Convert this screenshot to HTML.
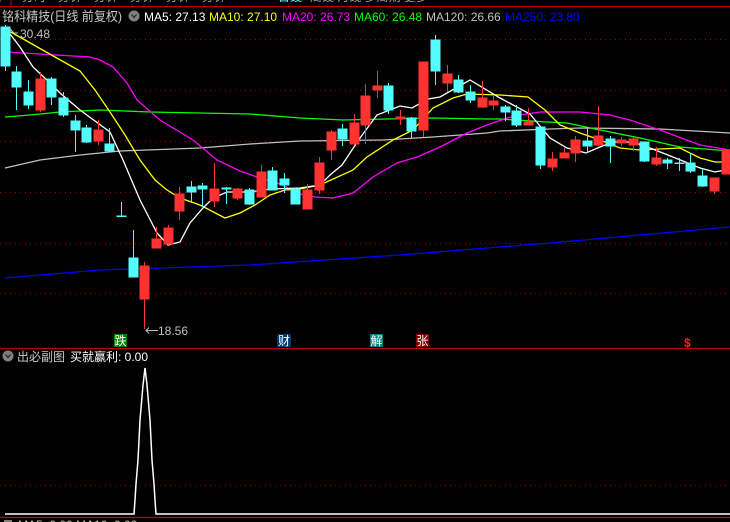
<!DOCTYPE html>
<html><head><meta charset="utf-8"><style>
html,body{margin:0;padding:0;background:#000;width:730px;height:522px;overflow:hidden}
svg{display:block}
text{font-family:"Liberation Sans","Noto Sans CJK SC",sans-serif}
</style></head><body>
<svg width="730" height="522" viewBox="0 0 730 522" xmlns="http://www.w3.org/2000/svg">
<rect width="730" height="522" fill="#000"/>
<rect x="0" y="-4" width="11" height="9" fill="none" stroke="#888" stroke-width="1"/>
<text x="22" y="1" font-size="12" fill="#a0a0a0">分时　分钟　分钟　分钟　分钟　分钟　</text>
<text x="278" y="1" font-size="12" fill="#54fcfc">日线</text>
<text x="310" y="1" font-size="12" fill="#a0a0a0">周线 月线 多周期 更多</text>
<rect x="0" y="2" width="730" height="4" fill="#000"/>
<line x1="0" y1="6.5" x2="730" y2="6.5" stroke="#c00000" stroke-width="1"/>
<line x1="11" y1="0" x2="11" y2="6" stroke="#c00000"/>
<text x="2" y="21" font-size="13" fill="#c8c8c8" textLength="120" lengthAdjust="spacingAndGlyphs">铭科精技(日线 前复权)</text>
<circle cx="134" cy="16" r="5.5" fill="#808080"/>
<path d="M131.5 14.5 L134 17.5 L136.5 14.5" stroke="#222" stroke-width="1.2" fill="none"/>
<text x="144" y="21" font-size="12" fill="#ffffff">MA5: 27.13</text>
<text x="209" y="21" font-size="12" fill="#ffff00">MA10: 27.10</text>
<text x="282" y="21" font-size="12" fill="#ff00ff">MA20: 26.73</text>
<text x="354" y="21" font-size="12" fill="#00ff00">MA60: 26.48</text>
<text x="426" y="21" font-size="12" fill="#c0c0c0">MA120: 26.66</text>
<text x="505" y="21" font-size="12" fill="#0000ff">MA250: 23.80</text>
<g stroke="#a00000" stroke-width="1" stroke-dasharray="1,4">
<line x1="0" y1="39.5" x2="730" y2="39.5"/>
<line x1="0" y1="90.5" x2="730" y2="90.5"/>
<line x1="0" y1="141.5" x2="730" y2="141.5"/>
<line x1="0" y1="192.5" x2="730" y2="192.5"/>
<line x1="0" y1="243.5" x2="730" y2="243.5"/>
<line x1="0" y1="293.5" x2="730" y2="293.5"/>
<line x1="0" y1="485.5" x2="730" y2="485.5"/>
</g>
<g fill="none" stroke-width="1.3">
<polyline stroke="#0000ff" points="5,278 100,270 250,265 400,255 550,243 730,227"/>
<polyline stroke="#c0c0c0" points="5,168 40,160 80,155 120,151 200,148 250,144 300,141 383,140 433,137 487,133 500,131 550,129 580,128 660,129 730,133"/>
<polyline stroke="#00ff00" points="5,117 30,115 60,112 100,110 150,112 200,113 250,114 300,118 343,120 433,118 487,119 500,119 547,122 567,123 600,130 640,138 680,147 730,151"/>
<polyline stroke="#ff00ff" points="5,52 40,54 90,57 100,60 113,67 127,83 137,100 160,120 193,140 217,160 240,171 260,178 280,184 300,194 315,197 333,198 353,193 373,177 397,163 417,157 440,147 467,133 487,125 507,118 520,115 540,112 580,112 610,115 630,120 660,130 700,145 730,150"/>
<polyline stroke="#ffff00" points="7,30 25,40 55,57 80,71 95,90 110,112 125,135 140,160 155,180 167,190 180,198 200,205 225,218 240,213 255,205 270,195 285,190 300,189 320,185 353,170 367,157 393,140 413,130 433,108 453,98 467,94 500,95 528,97 545,110 560,125 580,133 600,140 620,148 640,150 680,148 700,158 715,162 730,162"/>
<polyline stroke="#ffffff" points="7,30 20,47 33,67 50,83 60,93 80,110 110,132 123,160 140,200 157,233 168,245 180,242 190,223 203,208 213,198 227,192 250,192 270,189 300,188 320,185 330,175 342,165 360,138 377,115 400,106 412,108 428,99 440,97 470,80 500,98 530,114 550,138 567,148 586,153 600,147 613,142 633,142 650,148 673,157 700,168 715,172 730,169"/>
</g>
<g stroke-width="1">
<g fill="#54fcfc" stroke="#54fcfc">
<line x1="5.5" y1="25" x2="5.5" y2="71"/><rect x="1" y="27" width="9" height="39"/>
<line x1="16.5" y1="66" x2="16.5" y2="110"/><rect x="12" y="72" width="9" height="15"/>
<line x1="28.5" y1="80" x2="28.5" y2="109"/><rect x="24" y="92" width="9" height="13"/>
<line x1="51.5" y1="77" x2="51.5" y2="105"/><rect x="47" y="79" width="9" height="18"/>
<line x1="63.5" y1="92" x2="63.5" y2="117"/><rect x="59" y="98" width="9" height="17"/>
<line x1="75.5" y1="115" x2="75.5" y2="152"/><rect x="71" y="121" width="9" height="9"/>
<line x1="86.5" y1="125" x2="86.5" y2="143"/><rect x="82" y="128" width="9" height="14"/>
<line x1="109.5" y1="128" x2="109.5" y2="152"/><rect x="105" y="144" width="9" height="7"/>
<line x1="121.5" y1="202" x2="121.5" y2="216"/><rect x="117" y="216" width="9" height="0.5"/>
<line x1="133.5" y1="230" x2="133.5" y2="277"/><rect x="129" y="258" width="9" height="19"/>
<line x1="191.5" y1="181" x2="191.5" y2="203"/><rect x="187" y="187" width="9" height="5"/>
<line x1="202.5" y1="183" x2="202.5" y2="207"/><rect x="198" y="186" width="9" height="3"/>
<line x1="226.5" y1="187" x2="226.5" y2="204"/><rect x="222" y="188" width="9" height="1"/>
<line x1="249.5" y1="188" x2="249.5" y2="205"/><rect x="245" y="190" width="9" height="14"/>
<line x1="272.5" y1="167" x2="272.5" y2="190"/><rect x="268" y="171" width="9" height="19"/>
<line x1="284.5" y1="173" x2="284.5" y2="193"/><rect x="280" y="179" width="9" height="6"/>
<line x1="295.5" y1="188" x2="295.5" y2="204"/><rect x="291" y="189" width="9" height="15"/>
<line x1="342.5" y1="124" x2="342.5" y2="146"/><rect x="338" y="129" width="9" height="10"/>
<line x1="388.5" y1="83" x2="388.5" y2="114"/><rect x="384" y="86" width="9" height="24"/>
<line x1="411.5" y1="117" x2="411.5" y2="138"/><rect x="407" y="118" width="9" height="13"/>
<line x1="435.5" y1="35" x2="435.5" y2="85"/><rect x="431" y="40" width="9" height="31"/>
<line x1="458.5" y1="75" x2="458.5" y2="93"/><rect x="454" y="80" width="9" height="12"/>
<line x1="470.5" y1="85" x2="470.5" y2="103"/><rect x="466" y="92" width="9" height="8"/>
<line x1="505.5" y1="105" x2="505.5" y2="121"/><rect x="501" y="107" width="9" height="5"/>
<line x1="516.5" y1="105" x2="516.5" y2="127"/><rect x="512" y="111" width="9" height="14"/>
<line x1="540.5" y1="127" x2="540.5" y2="169"/><rect x="536" y="127" width="9" height="38"/>
<line x1="587.5" y1="127" x2="587.5" y2="153"/><rect x="583" y="141" width="9" height="5"/>
<line x1="610.5" y1="136" x2="610.5" y2="163"/><rect x="606" y="139" width="9" height="7"/>
<line x1="644.5" y1="142" x2="644.5" y2="162"/><rect x="640" y="142" width="9" height="19"/>
<line x1="667.5" y1="158" x2="667.5" y2="169"/><rect x="663" y="160" width="9" height="3"/>
<line x1="679.5" y1="158" x2="679.5" y2="171"/><rect x="675" y="163" width="9" height="0.5"/>
<line x1="690.5" y1="153" x2="690.5" y2="173"/><rect x="686" y="163" width="9" height="8"/>
<line x1="702.5" y1="169" x2="702.5" y2="187"/><rect x="698" y="176" width="9" height="10"/>
</g>
<g fill="#ff3232" stroke="#ff3232">
<line x1="40.5" y1="72" x2="40.5" y2="112"/><rect x="36" y="79" width="9" height="31"/>
<line x1="98.5" y1="120" x2="98.5" y2="145"/><rect x="94" y="130" width="9" height="11"/>
<line x1="144.5" y1="262" x2="144.5" y2="329"/><rect x="140" y="266" width="9" height="33"/>
<line x1="156.5" y1="227" x2="156.5" y2="248"/><rect x="152" y="239" width="9" height="9"/>
<line x1="168.5" y1="225" x2="168.5" y2="245"/><rect x="164" y="228" width="9" height="16"/>
<line x1="179.5" y1="187" x2="179.5" y2="220"/><rect x="175" y="194" width="9" height="17"/>
<line x1="214.5" y1="163" x2="214.5" y2="207"/><rect x="210" y="189" width="9" height="12"/>
<line x1="237.5" y1="188" x2="237.5" y2="200"/><rect x="233" y="189" width="9" height="9"/>
<line x1="261.5" y1="165" x2="261.5" y2="197"/><rect x="257" y="172" width="9" height="25"/>
<line x1="307.5" y1="184" x2="307.5" y2="209"/><rect x="303" y="190" width="9" height="19"/>
<line x1="319.5" y1="157" x2="319.5" y2="194"/><rect x="315" y="163" width="9" height="27"/>
<line x1="331.5" y1="130" x2="331.5" y2="160"/><rect x="327" y="132" width="9" height="18"/>
<line x1="354.5" y1="114" x2="354.5" y2="145"/><rect x="350" y="123" width="9" height="21"/>
<line x1="365.5" y1="84" x2="365.5" y2="144"/><rect x="361" y="96" width="9" height="29"/>
<line x1="377.5" y1="71" x2="377.5" y2="98"/><rect x="373" y="86" width="9" height="4"/>
<line x1="400.5" y1="110" x2="400.5" y2="125"/><rect x="396" y="117" width="9" height="2"/>
<line x1="423.5" y1="62" x2="423.5" y2="137"/><rect x="419" y="62" width="9" height="68"/>
<line x1="447.5" y1="65" x2="447.5" y2="92"/><rect x="443" y="74" width="9" height="9"/>
<line x1="482.5" y1="81" x2="482.5" y2="108"/><rect x="478" y="98" width="9" height="9"/>
<line x1="493.5" y1="95" x2="493.5" y2="110"/><rect x="489" y="101" width="9" height="4"/>
<line x1="528.5" y1="108" x2="528.5" y2="125"/><rect x="524" y="122" width="9" height="3"/>
<line x1="552.5" y1="152" x2="552.5" y2="171"/><rect x="548" y="159" width="9" height="8"/>
<line x1="564.5" y1="148" x2="564.5" y2="158"/><rect x="560" y="153" width="9" height="5"/>
<line x1="575.5" y1="136" x2="575.5" y2="162"/><rect x="571" y="140" width="9" height="13"/>
<line x1="598.5" y1="106" x2="598.5" y2="146"/><rect x="594" y="136" width="9" height="9"/>
<line x1="621.5" y1="137" x2="621.5" y2="146"/><rect x="617" y="140" width="9" height="3"/>
<line x1="633.5" y1="137" x2="633.5" y2="151"/><rect x="629" y="139" width="9" height="6"/>
<line x1="656.5" y1="147" x2="656.5" y2="166"/><rect x="652" y="158" width="9" height="6"/>
<line x1="714.5" y1="178" x2="714.5" y2="194"/><rect x="710" y="178" width="9" height="13"/>
<rect x="722" y="150" width="9" height="24"/>
</g>
</g>
<path d="M9 28 L14 33 L18 33" stroke="#c0c0c0" fill="none"/>
<text x="20" y="38" font-size="12" fill="#c0c0c0">30.48</text>
<path d="M158 330.5 H146 M149 327.5 L146 330.5 L149 333.5" stroke="#c0c0c0" fill="none"/>
<text x="158" y="335" font-size="12" fill="#c0c0c0">18.56</text>
<rect x="114" y="334" width="13" height="13" fill="#008000"/><text x="114.5" y="345" font-size="12" fill="#fff">跌</text>
<rect x="277" y="334" width="14" height="13" fill="#003870"/><text x="278" y="345" font-size="12" fill="#fff">财</text>
<rect x="370" y="334" width="13" height="13" fill="#008080"/><text x="370.5" y="345" font-size="12" fill="#fff">解</text>
<rect x="416" y="334" width="13" height="13" fill="#800000"/><text x="416.5" y="345" font-size="12" fill="#fff">张</text>
<text x="684" y="347" font-size="12" fill="#ff2020" font-weight="bold">$</text>
<line x1="0" y1="348.5" x2="730" y2="348.5" stroke="#c00000" stroke-width="1.2"/>
<circle cx="8" cy="356" r="5.5" fill="#808080"/>
<path d="M5.5 354.5 L8 357.5 L10.5 354.5" stroke="#222" stroke-width="1.2" fill="none"/>
<text x="17" y="361" font-size="12" fill="#c8c8c8">出必副图</text>
<text x="70" y="361" font-size="12" fill="#ffffff">买就赢利: 0.00</text>
<polyline fill="none" stroke="#ffffff" stroke-width="1.5" points="5,514 134,514 135,500 136,484 138,460 140,420 143,385 145,368 147,385 150,420 152,460 154,484 155,500 156,514 730,514"/>
<line x1="0" y1="517.5" x2="730" y2="517.5" stroke="#c00000" stroke-width="1.2"/>
<rect x="4" y="520" width="8" height="3" fill="#808080"/>
<text x="18" y="529" font-size="12" fill="#c0c0c0">MA5: 0.00 MA10: 0.00</text>
</svg>
</body></html>
